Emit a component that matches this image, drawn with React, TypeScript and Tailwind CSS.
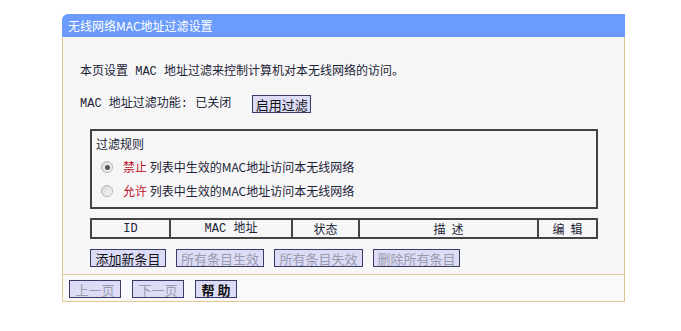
import React from 'react';

const cjk = "font-['Noto_Sans_CJK_SC',sans-serif]";
const mono = "font-['Liberation_Mono','Noto_Sans_CJK_SC',monospace]";

function Btn({ label, disabled, className = '' }: { label: string; disabled?: boolean; className?: string }) {
  return (
    <div
      className={`h-[18px] border border-[#3a3a66] bg-[#dcdcf6] flex items-center justify-center text-[13px] leading-none ${cjk} ${
        disabled ? 'text-[#9a9aae]' : 'text-[#111]'
      } ${className}`}
    >
      {label}
    </div>
  );
}

function Radio({ checked }: { checked?: boolean }) {
  return (
    <span className="w-[12px] h-[12px] rounded-full border border-[#b5b5b5] bg-gradient-to-br from-[#d8d8d8] to-[#fafafa] flex items-center justify-center shrink-0">
      {checked && <span className="w-[5px] h-[5px] rounded-full bg-[#555]" />}
    </span>
  );
}

export default function App() {
  const cols = [
    { label: 'ID', w: 'w-[79px]', font: mono },
    { label: 'MAC 地址', w: 'w-[122px]', font: mono },
    { label: '状态', w: 'w-[67px]', font: cjk },
    { label: '描\u2002述', w: 'w-[179px]', font: cjk },
    { label: '编\u2002辑', w: 'flex-1', font: cjk },
  ];

  return (
    <div className="w-[681px] h-[331px] bg-white pt-[14px] pl-[62px] text-[#1c2436]">
      <div className="w-[563px]">
        {/* title bar */}
        <div className={`h-[23px] bg-[#6a9bfd] rounded-tl-[6px] pl-[6px] text-[12px] leading-[23px] text-white ${cjk}`}>
          无线网络MAC地址过滤设置
        </div>

        {/* body */}
        <div className="border-x border-[#e3c594] bg-[#f6f6f6] pl-[17px] pr-[26px] pt-[27px] pb-[7px]">
          <div className={`text-[12px] leading-[16px] ${mono}`}>本页设置 MAC 地址过滤来控制计算机对本无线网络的访问。</div>

          <div className="flex items-center mt-[15px] h-[18px]">
            <span className={`text-[12px] ${mono}`}>MAC 地址过滤功能: 已关闭</span>
            <Btn label="启用过滤" className="ml-[21px] w-[59px]" />
          </div>

          <div className="ml-[10px] mt-[16px] mr-0 h-[80px] border-2 border-[#444] px-[4px] pt-[5px]">
            <div className={`text-[12px] leading-[16px] ${cjk}`}>过滤规则</div>
            <div className="flex items-center mt-[6px] h-[18px] pl-[5px] gap-[10px]">
              <Radio checked />
              <span className={`text-[12px] ${cjk}`}>
                <span className="text-[#c0102a]">禁止</span> 列表中生效的MAC地址访问本无线网络
              </span>
            </div>
            <div className="flex items-center mt-[6px] h-[18px] pl-[5px] gap-[10px]">
              <Radio />
              <span className={`text-[12px] ${cjk}`}>
                <span className="text-[#c0102a]">允许</span> 列表中生效的MAC地址访问本无线网络
              </span>
            </div>
          </div>

          <div className="ml-[10px] mt-[9px] h-[21px] border-2 border-[#444] flex">
            {cols.map((c, i) => (
              <div
                key={c.label}
                className={`${c.w} flex items-center justify-center text-[12px] ${c.font} ${
                  i < cols.length - 1 ? 'border-r-2 border-[#444]' : ''
                }`}
              >
                {c.label}
              </div>
            ))}
          </div>

          <div className="ml-[10px] mt-[10px] flex gap-[10px]">
            <Btn label="添加新条目" className="w-[76px]" />
            <Btn label="所有条目生效" disabled className="w-[88px]" />
            <Btn label="所有条目失效" disabled className="w-[89px]" />
            <Btn label="删除所有条目" disabled className="w-[87px]" />
          </div>
        </div>

        {/* footer */}
        <div className="border border-[#e3c594] bg-[#f9f9fb] h-[28px] pl-[6px] pt-[5px] flex items-start gap-[11px]">
          <Btn label="上一页" disabled className="w-[52px]" />
          <Btn label="下一页" disabled className="w-[52px]" />
          <Btn label="帮 助" className="w-[42px] font-bold" />
        </div>
      </div>
    </div>
  );
}
